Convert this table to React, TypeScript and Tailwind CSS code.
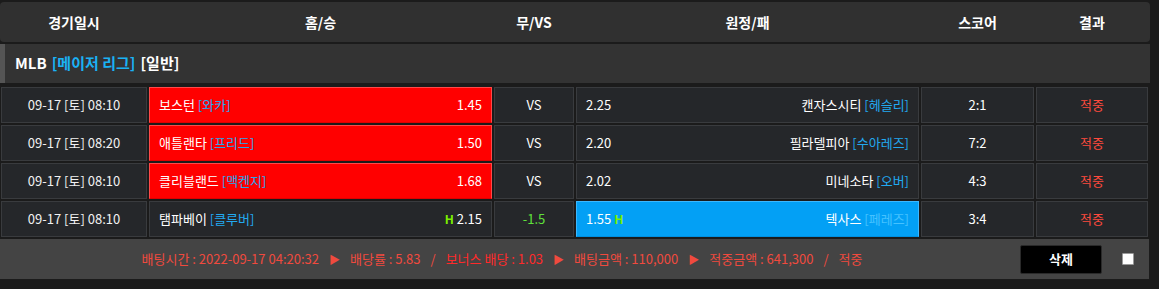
import React from "react";

type Row = {
  date: string;
  home: string;
  homePitcher: string;
  homeOdds: string;
  homeH?: boolean;
  mid: string;
  midGreen?: boolean;
  away: string;
  awayPitcher: string;
  awayOdds: string;
  awayH?: boolean;
  pick: "home" | "away";
  score: string;
};

const rows: Row[] = [
  { date: "09-17 [토] 08:10", home: "보스턴", homePitcher: "[와카]", homeOdds: "1.45", mid: "VS", away: "캔자스시티", awayPitcher: "[헤슬리]", awayOdds: "2.25", pick: "home", score: "2:1" },
  { date: "09-17 [토] 08:20", home: "애틀랜타", homePitcher: "[프리드]", homeOdds: "1.50", mid: "VS", away: "필라델피아", awayPitcher: "[수아레즈]", awayOdds: "2.20", pick: "home", score: "7:2" },
  { date: "09-17 [토] 08:10", home: "클리블랜드", homePitcher: "[맥켄지]", homeOdds: "1.68", mid: "VS", away: "미네소타", awayPitcher: "[오버]", awayOdds: "2.02", pick: "home", score: "4:3" },
  { date: "09-17 [토] 08:10", home: "탬파베이", homePitcher: "[클루버]", homeOdds: "2.15", homeH: true, mid: "-1.5", midGreen: true, away: "텍사스", awayPitcher: "[페레즈]", awayOdds: "1.55", awayH: true, pick: "away", score: "3:4" },
];

const cols = "grid grid-cols-[146px_343px_80px_343px_113px_112px] gap-[2px]";
const cell = "h-[36px] border border-[#393b3e] bg-[#25272a] flex items-center";

const App = () => {
  return (
    <div
      className="w-full h-[289px] bg-[#1b1b1b] text-white text-[13px] overflow-hidden"
      style={{ fontFamily: '"Noto Sans CJK KR", "Noto Sans", sans-serif' }}
    >
      <div className="w-[1150px] pt-[2px]">
        {/* Header */}
        <div className={`${cols} h-[40px] bg-[#303030] rounded-[4px] pl-[1px] font-bold text-[14px]`}>
          {["경기일시", "홈/승", "무/VS", "원정/패", "스코어", "결과"].map((h) => (
            <div key={h} className="flex items-center justify-center">
              {h}
            </div>
          ))}
        </div>

        {/* League */}
        <div className="mt-[2px] h-[39px] bg-[#333333] border-l-[5px] border-[#555555] flex items-center pl-[10px] font-bold text-[15px] gap-[5px]">
          <span>MLB</span>
          <span className="text-[#1ab2f5]">[메이저 리그]</span>
          <span>[일반]</span>
        </div>

        {/* Rows */}
        <div className={`${cols} mt-[4px] pl-[1px] gap-y-[2px]`}>
          {rows.map((r, i) => (
            <React.Fragment key={i}>
              <div className={`${cell} justify-center text-[#f2f2f2]`}>{r.date}</div>
              <div
                className={
                  r.pick === "home"
                    ? "h-[36px] border border-[#ff4a4a] border-b-[#e00000] bg-[#ff0000] flex items-center justify-between px-[9px]"
                    : `${cell} justify-between px-[9px]`
                }
              >
                <span>
                  {r.home} <span className="text-[#22a9f0]">{r.homePitcher}</span>
                </span>
                <span className="flex items-center gap-[3px]">
                  {r.homeH && <span className="text-[#7cf000] font-bold text-[12px]">H</span>}
                  {r.homeOdds}
                </span>
              </div>
              <div className={`${cell} justify-center ${r.midGreen ? "text-[#5fe03a]" : ""}`}>{r.mid}</div>
              <div
                className={
                  r.pick === "away"
                    ? "h-[36px] border border-[#3cb8ff] border-b-[#0090e0] bg-[#03a0f5] flex items-center justify-between px-[9px]"
                    : `${cell} justify-between px-[9px]`
                }
              >
                <span className="flex items-center gap-[3px]">
                  {r.awayOdds}
                  {r.awayH && <span className="text-[#7cf000] font-bold text-[12px]">H</span>}
                </span>
                <span>
                  {r.away}{" "}
                  <span className={r.pick === "away" ? "text-[#45c2ff]" : "text-[#22a9f0]"}>{r.awayPitcher}</span>
                </span>
              </div>
              <div className={`${cell} justify-center`}>{r.score}</div>
              <div className={`${cell} justify-center text-[#ff4a3d]`}>적중</div>
            </React.Fragment>
          ))}
        </div>

        {/* Footer */}
        <div className="mt-[2px] h-[40px] w-[1149px] bg-[#444444] flex items-center pr-[15px]">
          <div className="flex-1 mr-[16px] flex justify-center items-center gap-[10px] text-[#f04a3e]">
            <span>배팅시간 : 2022-09-17 04:20:32</span>
            <span className="text-[11px]">▶</span>
            <span>배당률 : 5.83</span>
            <span>/</span>
            <span className="text-[#ff2a2a]">보너스 배당 : 1.03</span>
            <span className="text-[11px]">▶</span>
            <span>배팅금액 : 110,000</span>
            <span className="text-[11px]">▶</span>
            <span>적중금액 : 641,300</span>
            <span>/</span>
            <span>적중</span>
          </div>
          <button className="w-[82px] h-[29px] bg-black border border-[#2a2a2a] rounded-[2px] text-white font-bold text-[13px]">
            삭제
          </button>
          <span className="ml-[20px] w-[12px] h-[12px] bg-white border border-[#999999] rounded-[1px]" />
        </div>
      </div>
    </div>
  );
};

export default App;
